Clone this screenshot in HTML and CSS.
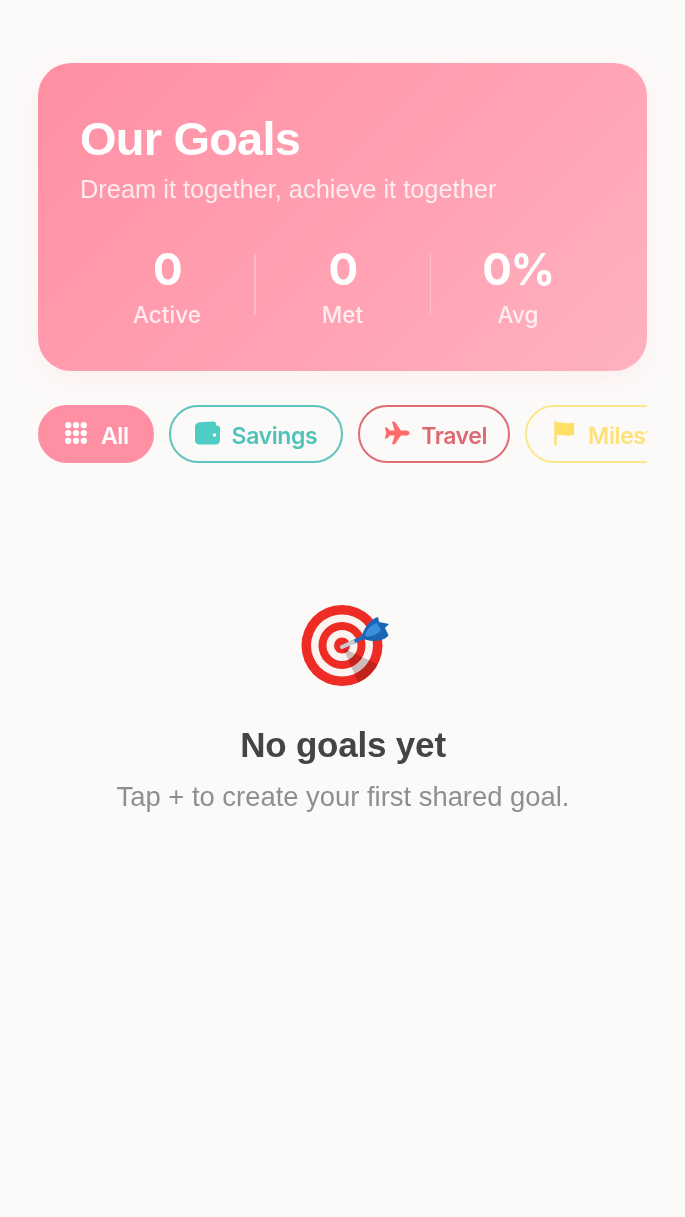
FILE: index.html
```html
<!DOCTYPE html>
<html lang="en">

<head>
    <meta charset="UTF-8">
    <meta name="viewport" content="width=device-width, initial-scale=1.0">
    <title>Our Goals</title>
    <link rel="stylesheet" href="styles.css">
</head>

<body>
    <div class="page">
        <div class="hero">
            <h1>Our Goals</h1>
            <p class="hero-sub">Dream it together, achieve it together</p>
            <div class="stats">
                <div class="stat">
                    <div class="stat-value">0</div>
                    <div class="stat-label">Active</div>
                </div>
                <div class="stat-line"></div>
                <div class="stat">
                    <div class="stat-value">0</div>
                    <div class="stat-label">Met</div>
                </div>
                <div class="stat-line"></div>
                <div class="stat">
                    <div class="stat-value">0%</div>
                    <div class="stat-label">Avg</div>
                </div>
            </div>
        </div>

        <!-- Filter pills -->
        <div class="filters">
            <a href="#" class="pill pill-all">
                <svg class="pill-icon" viewBox="0 0 24 24" fill="currentColor">
                    <circle cx="3.500" cy="3.500" r="3.400"/><circle cx="12" cy="3.500" r="3.400"/><circle cx="20.500" cy="3.500" r="3.400"/>
                    <circle cx="3.500" cy="12" r="3.400"/><circle cx="12" cy="12" r="3.400"/><circle cx="20.500" cy="12" r="3.400"/>
                    <circle cx="3.500" cy="20.500" r="3.400"/><circle cx="12" cy="20.500" r="3.400"/><circle cx="20.500" cy="20.500" r="3.400"/>
                </svg>
                All
            </a>
            <a href="#" class="pill pill-savings">
                <svg class="pill-icon" viewBox="0 0 25 23" fill="#4ecdc4">
                    <path d="M0 6C0 2.500 2 1 5 .7L18 0C20 0 21 1 21 2.500V4H22C23.700 4 25 5.300 25 7V19C25 21.200 23.200 23 21 23H4C1.800 23 0 21.200 0 19Z"/>
                    <circle cx="19.500" cy="13.500" r="1.800" fill="#fcfaf9"/>
                </svg>
                Savings
            </a>
            <a href="#" class="pill pill-travel">
                <svg class="pill-icon" viewBox="0 0 28 24" fill="#ff6b6b">
                    <path d="M27.500 12C27.500 10.400 25.800 9.200 24 9.200H18.200L11.800 0H8.600L11.500 9.200H6.200L3.400 6H.8L2.500 12 .8 18H3.400L6.200 14.800H11.500L8.600 24H11.800L18.200 14.800H24C25.800 14.800 27.500 13.600 27.500 12Z"/>
                </svg>
                Travel
            </a>
            <a href="#" class="pill pill-miles">
                <svg class="pill-icon" viewBox="0 0 24 26" fill="#ffe066">
                    <path d="M1.500 0H4V1.500C9 .5 13 4 23 1.500V15C14 17.500 9 14 4 15V26H1.500Z"/>
                </svg>
                Milestones
            </a>
        </div>

        <!-- Kosong -->
        <div class="empty">
            <svg class="empty-icon" viewBox="0 0 88 84">
                <defs>
                    <clipPath id="board"><circle cx="41" cy="41.500" r="40.500"/></clipPath>
                </defs>
                <circle cx="41" cy="41.500" r="40.500" fill="#ee2b24"/>
                <circle cx="41" cy="41.500" r="31" fill="#fdf3f0"/>
                <circle cx="41" cy="41.500" r="23.500" fill="#ee2b24"/>
                <circle cx="41" cy="41.500" r="15.500" fill="#fdf3f0"/>
                <circle cx="41" cy="41.500" r="8" fill="#ee2b24"/>
                <path class="dart-shadow" d="M42 44 80 62 58 80Z" clip-path="url(#board)"/>
                <path d="M51 38.500 65 32" stroke="#1f6fb8" stroke-width="4" stroke-linecap="round"/>
                <path d="M41 43 52 38" stroke="#c9ccd2" stroke-width="4" stroke-linecap="round"/>
                <path d="M60 35C62 25 69 15 77 13L78 18 88 20 84 24 87.500 31C84 37 73 38 66 36Z" fill="#1a66b5"/>
                <path d="M64 31C66 25 71 20 76 19L80 26C77 30 71 32 66 33Z" fill="#3a8fdc"/>
            </svg>
            <h2>No goals yet</h2>
            <p>Tap + to create your first shared goal.</p>
        </div>
    </div>
</body>

</html>
```

FILE: styles.css
```css
body {
    font-family: "Liberation Sans", Arial, sans-serif;
    margin: 0;
    padding: 0;
    background-color: #fcfaf9;
    overflow: hidden;
}

.page {
    height: 1217px;
    padding: 63px 38px 0;
    box-sizing: border-box;
}

.hero {
    height: 308px;
    box-sizing: border-box;
    padding: 51px 42px 0;
    border-radius: 33px;
    background: linear-gradient(135deg, #ff8fa3 0%, #ffb1c0 100%);
    box-shadow: 0 8px 24px rgba(255, 143, 163, 0.1);
    color: white;
}

.hero h1 {
    margin: 0;
    font-size: 47px;
    line-height: 50px;
    font-weight: 700;
    letter-spacing: -0.8px;
}

.hero-sub {
    margin: 10px 0 0;
    font-size: 25.400px;
    line-height: 30px;
    color: rgba(255, 255, 255, 0.8);
}

.stats {
    display: flex;
    align-items: center;
    margin-top: 40px;
}

.stat {
    flex: 1;
    text-align: center;
}

.stat-value {
    font-family: Inter, sans-serif;
    font-size: 44px;
    line-height: 50px;
    font-weight: 700;
    letter-spacing: -1.500px;
}

.stat-label {
    margin-top: 7px;
    font-family: Inter, sans-serif;
    font-size: 22.500px;
    line-height: 28px;
    font-weight: 500;
    color: rgba(255, 255, 255, 0.8);
}

.stat-line {
    width: 1.500px;
    height: 62px;
    margin-top: -6px;
    background-color: rgba(255, 255, 255, 0.25);
}

.filters {
    display: flex;
    gap: 15px;
    margin-top: 34px;
    overflow: hidden;
}

.pill {
    display: flex;
    flex-shrink: 0;
    align-items: center;
    gap: 12px;
    height: 58px;
    box-sizing: border-box;
    padding: 3px 23px 0 24px;
    border: 2px solid;
    border-radius: 29px;
    font-family: Inter, sans-serif;
    font-size: 23px;
    font-weight: 600;
    letter-spacing: -0.4px;
    text-decoration: none;
}

.pill-icon {
    width: 24px;
    height: 24px;
    margin-top: -5px;
}

.pill-all {
    background-color: #ff8fa3;
    border-color: #ff8fa3;
    color: white;
}

.pill-all .pill-icon {
    width: 22px;
    height: 22px;
    margin-left: 1px;
    margin-right: 2px;
}

.pill-savings {
    padding-right: 24px;
    border-color: #5fc4bd;
    color: #4fc3ba;
}

.pill-savings .pill-icon {
    width: 25px;
}

.pill-travel {
    gap: 11px;
    padding-right: 21px;
    border-color: #dd6e75;
    color: #dc6a72;
}

.pill-travel .pill-icon {
    width: 26px;
}

.pill-miles {
    border-color: #fbe88c;
    color: #fde27a;
}

.pill-miles .pill-icon {
    margin-left: 1px;
}

.dart-shadow {
    fill: #cfc6c6;
    mix-blend-mode: multiply;
}

.empty {
    display: flex;
    flex-direction: column;
    align-items: center;
    margin-top: 141px;
    padding-left: 1px;
}

.empty-icon {
    width: 88px;
    height: 84px;
    margin-left: 3px;
}

.empty h2 {
    margin: 37px 0 0;
    font-size: 35px;
    line-height: 40px;
    font-weight: 700;
    letter-spacing: -0.2px;
    color: #444444;
}

.empty p {
    margin: 16px 0 0;
    font-size: 27.400px;
    line-height: 32px;
    color: #8f8f8f;
}
```
